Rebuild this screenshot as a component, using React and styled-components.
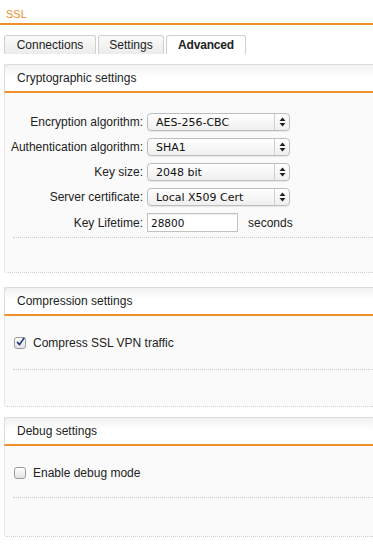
import React from 'react'
import styled, { createGlobalStyle } from 'styled-components'

const GlobalStyle = createGlobalStyle`
  html, body {
    margin: 0;
    padding: 0;
    background: #fff;
    overflow: hidden;
  }
  body {
    font-family: "Liberation Sans", Arial, sans-serif;
    font-size: 12px;
    color: #222;
  }
`

const ORANGE = '#ef8f2a'

const Page = styled.div`
  width: 373px;
  height: 545px;
  overflow: hidden;
`

const Title = styled.div`
  height: 23px;
  line-height: 28px;
  padding-left: 6px;
  font-size: 11px;
  color: ${ORANGE};
  border-bottom: 2px solid ${ORANGE};
`

const TabBar = styled.div`
  display: flex;
  gap: 2px;
  padding: 10px 0 0 4px;
  margin-bottom: 10px;
`

const Tab = styled.div`
  height: 19px;
  line-height: 19px;
  width: ${(p) => p.width}px;
  border: 1px solid #cfcfcf;
  border-bottom: none;
  border-radius: 3px 3px 0 0;
  background: ${(p) => (p.active ? '#fff' : 'linear-gradient(#fafafa, #ececec)')};
  font-weight: ${(p) => (p.active ? 'bold' : 'normal')};
  letter-spacing: ${(p) => (p.active ? '-0.2px' : '0')};
  color: #222;
  box-sizing: border-box;
  text-align: center;
  white-space: nowrap;
`

const Panel = styled.section`
  margin: 0 0 ${(p) => p.gap}px 4px;
  border-left: 1px dotted #d6d6d6;
  border-bottom: 1px dotted #cfcfcf;
  border-bottom-left-radius: 3px;
  background: #fafafa;
  height: ${(p) => p.height}px;
  box-sizing: border-box;
`

const PanelHeader = styled.div`
  height: 26px;
  line-height: 27px;
  padding-left: 12px;
  border-top: 1px solid #dcdcdc;
  border-left: 1px solid #dcdcdc;
  margin-left: -1px;
  border-top-left-radius: 4px;
  background: linear-gradient(#f1f1f1, #fff 45%);
  border-bottom: 2px solid ${ORANGE};
  font-size: 12px;
  color: #222;
`

const FormGrid = styled.div`
  display: grid;
  grid-template-columns: 138px 1fr;
  column-gap: 4px;
  row-gap: 7px;
  align-items: center;
  padding: 20px 0 0 0;
`

const Label = styled.label`
  text-align: right;
  white-space: nowrap;
  color: #222;
`

const Select = styled.div`
  width: 143px;
  height: 18px;
  box-sizing: border-box;
  border: 1px solid #bdbdbd;
  border-radius: 4px;
  background: linear-gradient(#ffffff, #efefef);
  box-shadow: 0 1px 1px rgba(0, 0, 0, 0.08);
  display: flex;
  align-items: center;
  font-family: "DejaVu Sans", Verdana, sans-serif;
  font-size: 11px;
  color: #111;
`

const SelectValue = styled.span`
  flex: 1;
  padding-left: 8px;
  white-space: nowrap;
`

const SelectArrows = styled.span`
  width: 14px;
  height: 100%;
  border-left: 1px solid #d0d0d0;
  display: flex;
  align-items: center;
  justify-content: center;
`

const InputRow = styled.div`
  display: flex;
  align-items: center;
  gap: 10px;
`

const TextInput = styled.div`
  width: 91px;
  height: 19px;
  box-sizing: border-box;
  border: 1px solid #c2c2c2;
  box-shadow: inset 0 1px 1px rgba(0, 0, 0, 0.08);
  background: #fff;
  padding-left: 3px;
  line-height: 19px;
  font-family: "DejaVu Sans", Verdana, sans-serif;
  font-size: 10.5px;
  color: #111;
`

const Separator = styled.div`
  margin: ${(p) => p.top}px 0 0 8px;
  border-top: 1px dotted #c9c9c9;
`

const CheckRow = styled.label`
  display: flex;
  align-items: center;
  gap: 7px;
  padding: 20px 0 0 9px;
  color: #222;
`

const Box = styled.span`
  width: 12px;
  height: 12px;
  box-sizing: border-box;
  border: 1px solid #9a9a9a;
  border-radius: 3px;
  background: linear-gradient(#ffffff, #e4e4e4);
  display: inline-flex;
  align-items: center;
  justify-content: center;
  overflow: visible;
`

const Arrows = () => (
  <svg width="7" height="10" viewBox="0 0 7 10">
    <path d="M3.5 0.5 L6.5 4 L0.5 4 Z" fill="#222" />
    <path d="M3.5 9.5 L6.5 6 L0.5 6 Z" fill="#222" />
  </svg>
)

const Dropdown = ({ value }) => (
  <Select>
    <SelectValue>{value}</SelectValue>
    <SelectArrows>
      <Arrows />
    </SelectArrows>
  </Select>
)

const Checkbox = ({ checked, children }) => (
  <CheckRow>
    <Box>
      {checked && (
        <svg width="12" height="12" viewBox="0 0 12 12" style={{ marginTop: -2, marginLeft: 1 }}>
          <path d="M2 6.5 L4.8 9.5 L10.5 1" fill="none" stroke="#1f3f7a" strokeWidth="2.2" strokeLinecap="round" strokeLinejoin="round" />
        </svg>
      )}
    </Box>
    {children}
  </CheckRow>
)

const App = () => {
  return (
    <Page>
      <GlobalStyle />
      <Title>SSL</Title>
      <TabBar>
        <Tab width={92}>Connections</Tab>
        <Tab width={66}>Settings</Tab>
        <Tab width={80} active>
          Advanced
        </Tab>
      </TabBar>

      <Panel height={209} gap={14}>
        <PanelHeader>Cryptographic settings</PanelHeader>
        <FormGrid>
          <Label>Encryption algorithm:</Label>
          <Dropdown value="AES-256-CBC" />
          <Label>Authentication algorithm:</Label>
          <Dropdown value="SHA1" />
          <Label>Key size:</Label>
          <Dropdown value="2048 bit" />
          <Label>Server certificate:</Label>
          <Dropdown value="Local X509 Cert" />
          <Label>Key Lifetime:</Label>
          <InputRow>
            <TextInput>28800</TextInput>
            <span>seconds</span>
          </InputRow>
        </FormGrid>
        <Separator top={5} />
      </Panel>

      <Panel height={120} gap={10}>
        <PanelHeader>Compression settings</PanelHeader>
        <Checkbox checked>Compress SSL VPN traffic</Checkbox>
        <Separator top={19} />
      </Panel>

      <Panel height={120} gap={0}>
        <PanelHeader>Debug settings</PanelHeader>
        <Checkbox>Enable debug mode</Checkbox>
        <Separator top={17} />
      </Panel>
    </Page>
  )
}

export default App
